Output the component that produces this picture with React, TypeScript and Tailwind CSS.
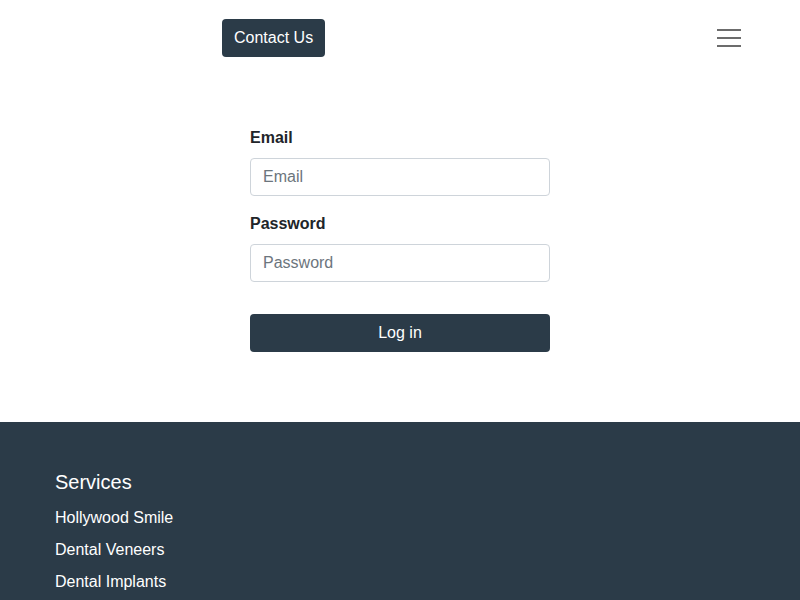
import React from 'react';

const services = ['Hollywood Smile', 'Dental Veneers', 'Dental Implants'];

export default function App() {
  return (
    <div className="min-h-screen bg-white font-['Liberation_Sans',Arial,sans-serif] text-[#212529]">
      {/* Header */}
      <header className="relative flex h-[76px] items-center">
        <button className="ml-[222px] h-[38px] rounded-[4px] bg-[#2b3b48] px-[12px] text-[16px] text-white">
          Contact Us
        </button>
        <button
          aria-label="Menu"
          className="ml-auto mr-[59px] flex h-[20px] w-[24px] flex-col justify-between py-[1px]"
        >
          <span className="block h-[2px] w-full bg-[#6c6c6c]" />
          <span className="block h-[2px] w-full bg-[#6c6c6c]" />
          <span className="block h-[2px] w-full bg-[#6c6c6c]" />
        </button>
      </header>

      {/* Login form */}
      <main className="flex justify-center pt-[50px] pb-[70px]">
        <form className="flex w-[300px] flex-col" onSubmit={e => e.preventDefault()}>
          <label htmlFor="email" className="mb-[8px] text-[16px] font-bold leading-[24px]">
            Email
          </label>
          <input
            id="email"
            type="email"
            placeholder="Email"
            className="h-[38px] rounded-[4px] border border-[#ced4da] px-[12px] text-[16px] placeholder:text-[#6c757d] focus:outline-none"
          />
          <label htmlFor="password" className="mt-[16px] mb-[8px] text-[16px] font-bold leading-[24px]">
            Password
          </label>
          <input
            id="password"
            type="password"
            placeholder="Password"
            className="h-[38px] rounded-[4px] border border-[#ced4da] px-[12px] text-[16px] placeholder:text-[#6c757d] focus:outline-none"
          />
          <button
            type="submit"
            className="mt-[32px] h-[38px] rounded-[4px] bg-[#2b3b48] text-[16px] text-white"
          >
            Log in
          </button>
        </form>
      </main>

      {/* Footer */}
      <footer className="bg-[#2b3b48] px-[55px] pt-[46px] pb-[40px] text-white">
        <h5 className="text-[20px] leading-[28px]">Services</h5>
        <ul className="mt-[10px] flex flex-col gap-[8px]">
          {services.map(s => (
            <li key={s} className="text-[16px] leading-[24px]">
              <a href="#">{s}</a>
            </li>
          ))}
        </ul>
      </footer>
    </div>
  );
}
